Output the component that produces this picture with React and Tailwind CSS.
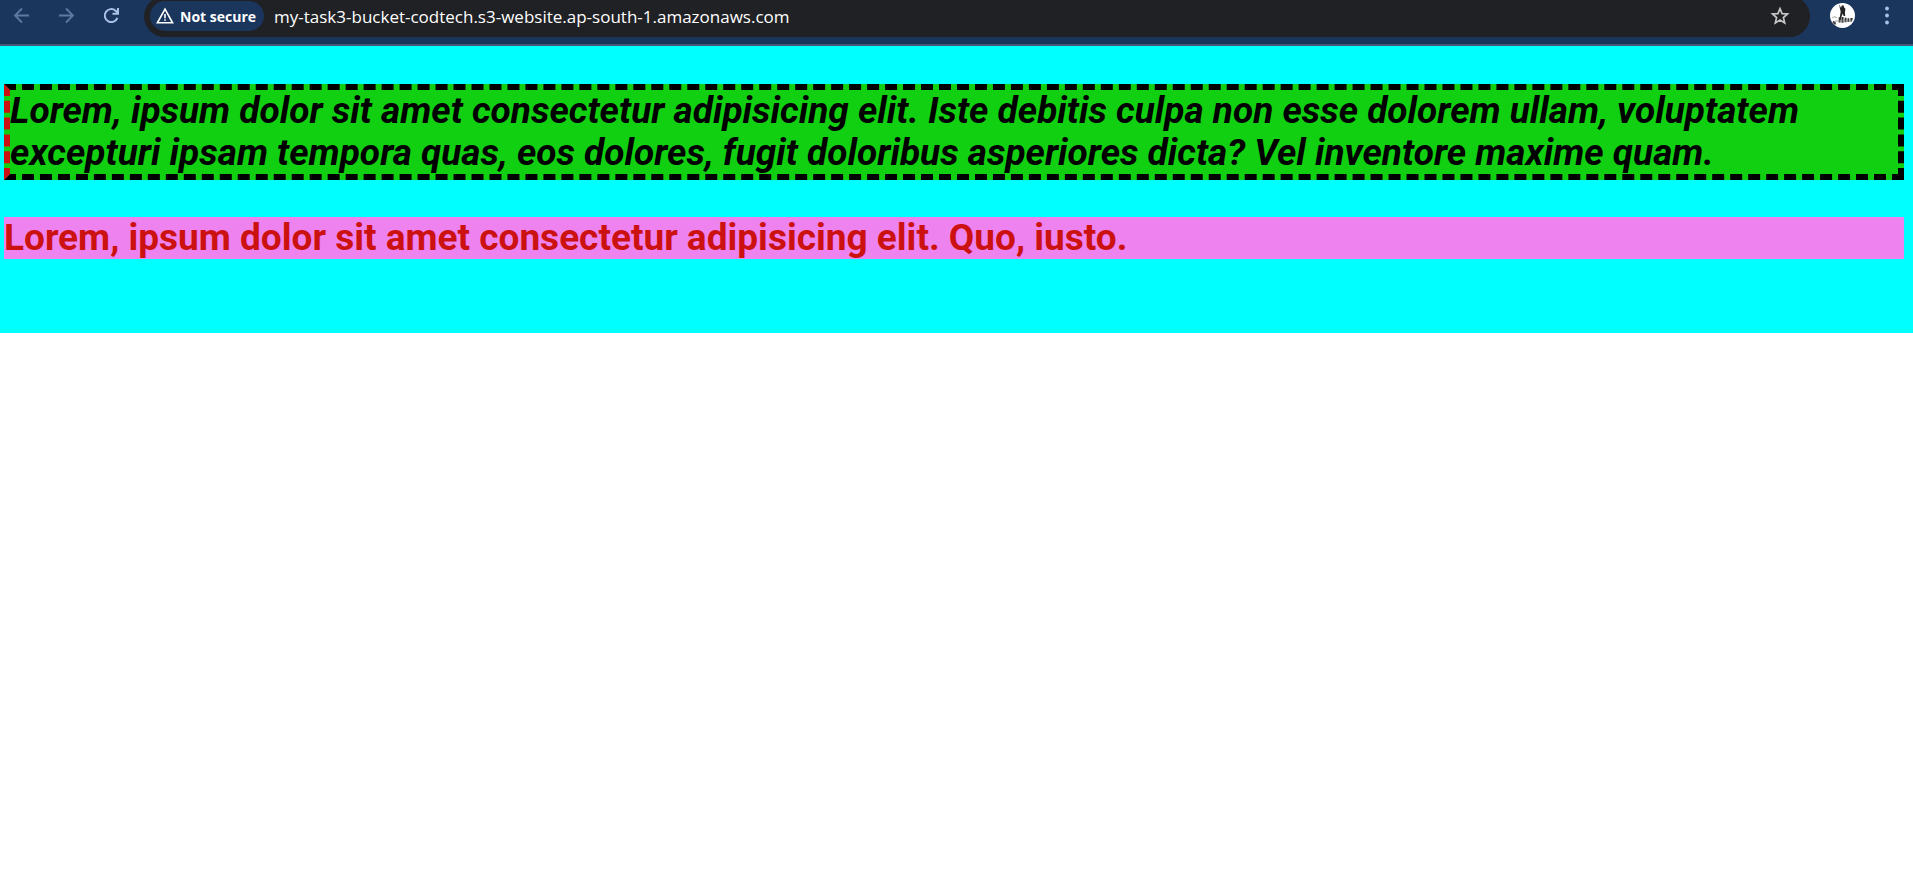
import React from "react";

function BrowserBar() {
  return (
    <header className="flex h-[46px] items-start overflow-hidden border-b-2 border-[#44597a] bg-[#1b365d] font-['Open_Sans','Noto_Sans',sans-serif]">
      <nav className="flex h-8 items-center gap-[25px] pl-3 text-[#a8c7fa]">
        <button type="button" aria-label="Back" disabled className="text-[#5d7aa3]">
          <svg viewBox="0 0 20 20" className="size-5" fill="none" stroke="currentColor" strokeWidth="1.8">
            <path d="M17 9.5H3M10 2.5L3 9.5l7 7" />
          </svg>
        </button>
        <button type="button" aria-label="Forward" disabled className="text-[#5d7aa3]">
          <svg viewBox="0 0 20 20" className="size-5" fill="none" stroke="currentColor" strokeWidth="1.8">
            <path d="M2 9.5h14M9 2.5l7 7-7 7" />
          </svg>
        </button>
        <button type="button" aria-label="Reload" className="text-[#a9c1e6]">
          <svg viewBox="0 0 20 20" className="size-5" fill="none" stroke="currentColor" strokeWidth="2">
            <path d="M15.4 11.8A6.5 6.5 0 1 1 13.6 4.7L16 7.3" />
            <path d="M16 2v5.8h-5.5" />
          </svg>
        </button>
      </nav>
      <div className="-mt-1 ml-[22px] flex h-[41px] flex-1 items-start rounded-full bg-[#202124] pl-[6px] pr-5 pt-1">
        <button type="button" className="mt-px flex h-[30px] items-center gap-[6px] rounded-full bg-[#1b365d] pl-[6px] pr-2 text-[14px] font-bold text-white">
          <svg viewBox="0 0 18 18" className="size-[18px]" fill="none" stroke="currentColor" strokeWidth="1.6">
            <path d="M9 2.2L16.6 15.8H1.4z" />
            <path d="M9 7v4.3M9 12.2v1.6" />
          </svg>
          Not secure
        </button>
        <input
          aria-label="Address"
          readOnly
          defaultValue="my-task3-bucket-codtech.s3-website.ap-south-1.amazonaws.com"
          className="ml-[10px] h-8 min-w-0 flex-1 bg-transparent text-[17px] text-white outline-none"
        />
        <button type="button" aria-label="Bookmark this page" className="mt-[6px] text-[#c7c7c7]">
          <svg viewBox="0 0 20 20" className="size-5" fill="none" stroke="currentColor" strokeWidth="1.7">
            <path d="M10 2.6l2.1 5 5.4.4-4.1 3.6 1.3 5.3L10 14.1l-4.7 2.8 1.3-5.3L2.5 8l5.4-.4z" />
          </svg>
        </button>
      </div>
      <button type="button" aria-label="Profile" className="ml-5 mt-[3px]">
        <svg viewBox="0 0 25 25" className="size-[25px]">
          <circle cx="12.5" cy="12.5" r="12.5" fill="#fff" />
          <path d="M9.2 1.2l1.7 3.6 1-2.2 1.6-.3.5 2 1.4 1.5-.5 3.6.3 3.6h-1.6l-.8-2.6-1.2 2.8-.8 3.8H9.2l1-5 .5-3.6-.9-3.4z" fill="#222" />
          <path d="M8.7 14.3h1.8v5.2H8.7zM11.5 14h2v5.8h-2zM14.6 14.8h1.9v4.4h-1.9zM17.5 15.2h1.8v3.7h-1.8zM20.4 15h2.4l-.8 3.6h-1.6z" fill="#333" />
          <path d="M3.2 17.8l2.3 1.3.7 2.2-1.6.5-2-2.2z" fill="#444" />
          <path d="M2.2 14.8q2-2 4.6-.2M5 18h17" stroke="#888" strokeWidth=".8" fill="none" />
        </svg>
      </button>
      <button type="button" aria-label="Menu" className="ml-[22px] mr-4 mt-[5px] text-[#a9c1e6]">
        <svg viewBox="0 0 20 20" className="size-5" fill="currentColor">
          <circle cx="10" cy="3.5" r="1.9" />
          <circle cx="10" cy="10.5" r="1.9" />
          <circle cx="10" cy="17.5" r="1.9" />
        </svg>
      </button>
    </header>
  );
}

export default function App() {
  return (
    <div className="min-h-screen bg-white">
      <BrowserBar />
      <main className="flex flex-col gap-[37px] bg-[aqua] pb-[74px] pl-1 pr-[9px] pt-[38px] font-[Roboto,'Liberation_Sans',sans-serif] text-[37px] font-bold leading-[42px]">
        <p className="border-[6px] border-dashed border-black border-l-[#cc1111] bg-[#11d011] italic text-black">
          Lorem, ipsum dolor sit amet consectetur adipisicing elit. Iste debitis culpa non esse dolorem ullam, voluptatem excepturi ipsam tempora quas, eos dolores, fugit doloribus asperiores dicta? Vel inventore maxime quam.
        </p>
        <p className="bg-[violet] text-[#cc1111]">
          Lorem, ipsum dolor sit amet consectetur adipisicing elit. Quo, iusto.
        </p>
      </main>
    </div>
  );
}
